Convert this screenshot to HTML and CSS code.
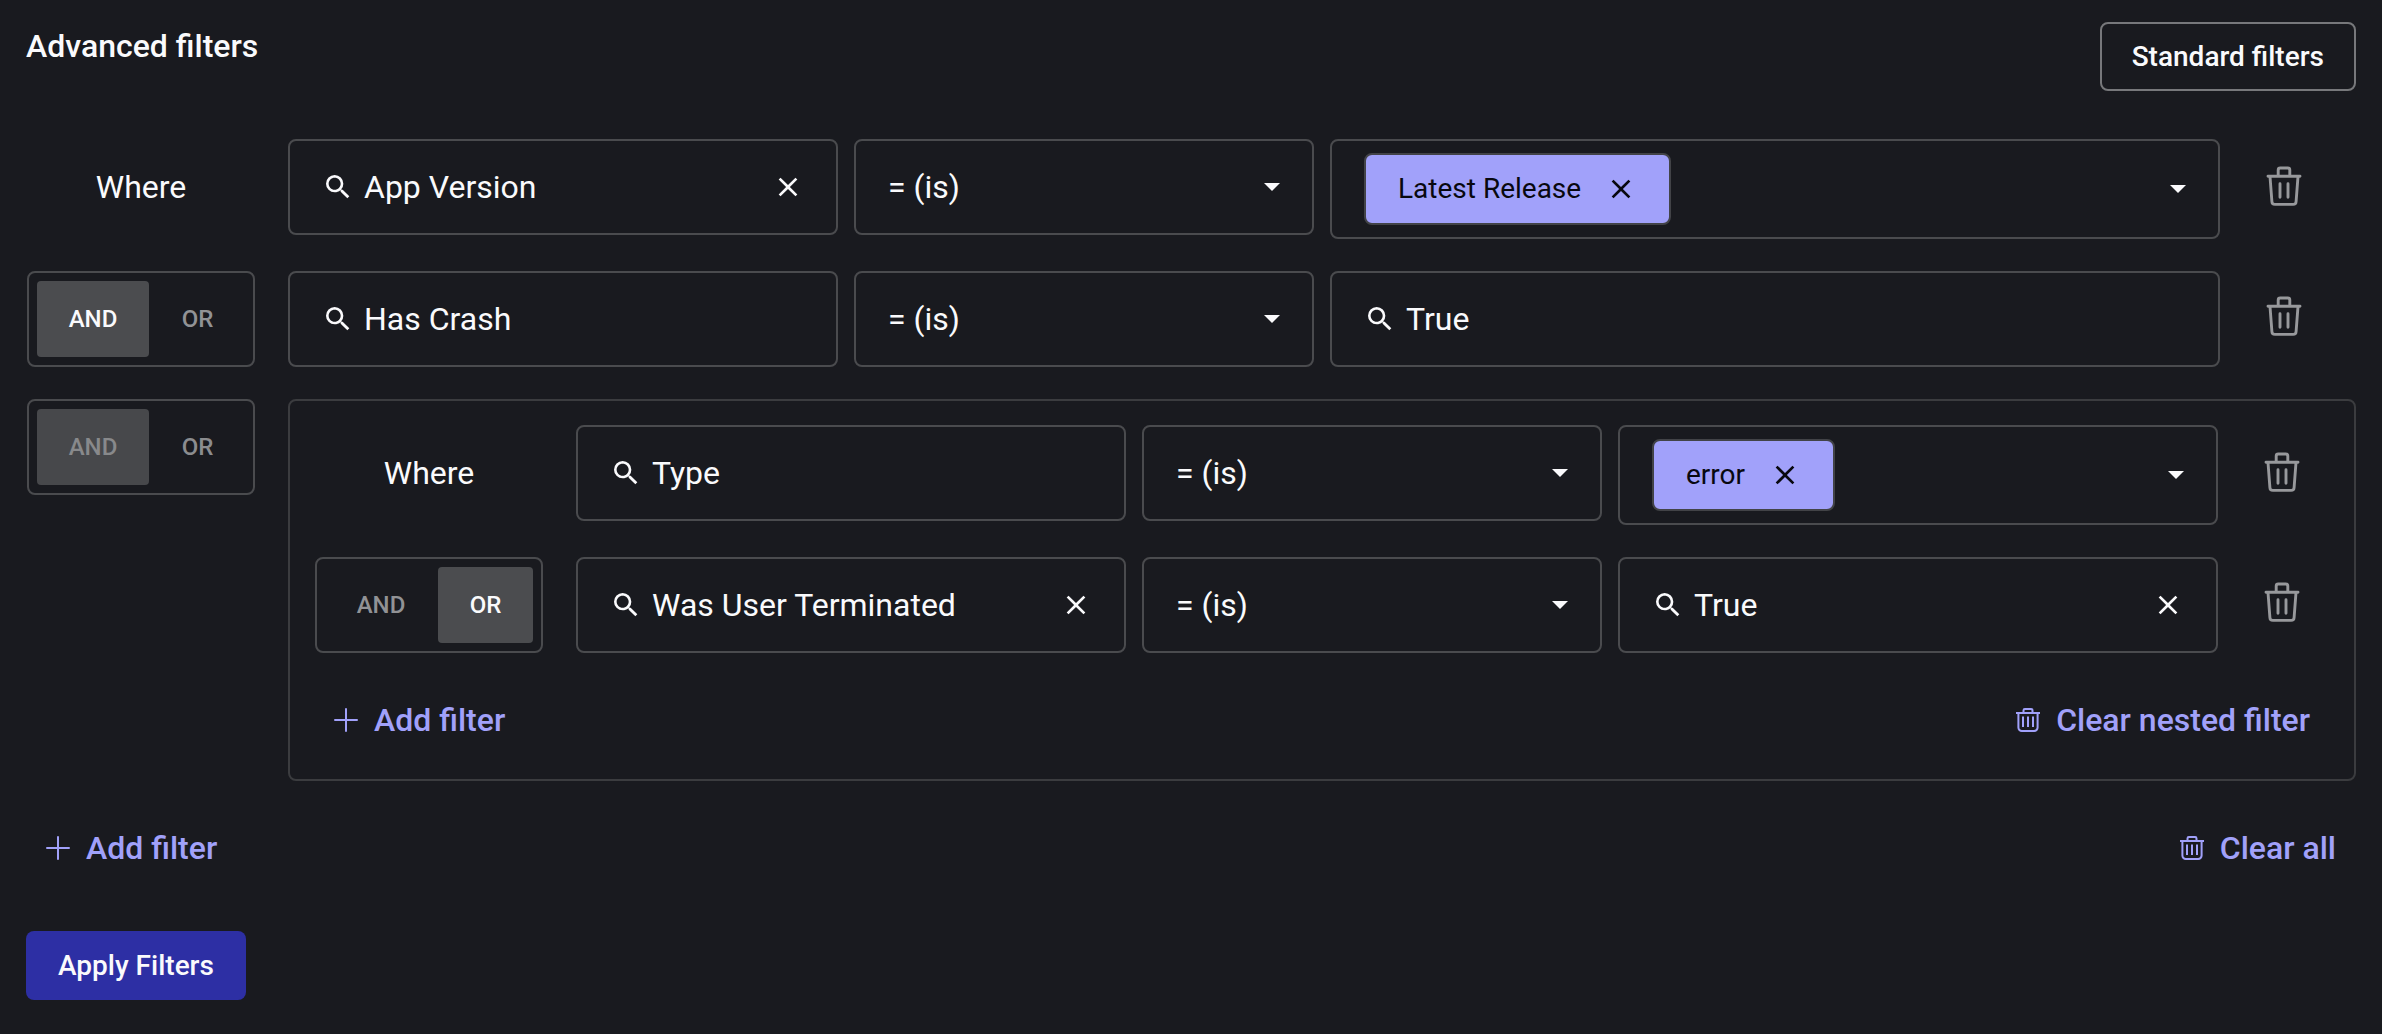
FILE: index.html
```html
<!DOCTYPE html>
<html lang="en">
<head>
<meta charset="utf-8">
<title>Advanced filters</title>
<link rel="stylesheet" href="styles.css">
</head>
<body>
<svg class="sprite" aria-hidden="true">
  <symbol id="search" viewBox="0 0 24 24"><path fill="currentColor" d="M15.5 14h-.79l-.28-.27A6.47 6.47 0 0 0 16 9.5 6.5 6.5 0 1 0 9.5 16c1.61 0 3.09-.59 4.23-1.57l.27.28v.79l5 4.99L20.49 19l-4.99-5zm-6 0C7.01 14 5 11.99 5 9.5S7.01 5 9.5 5 14 7.01 14 9.5 11.99 14 9.5 14z"/></symbol>
  <symbol id="close" viewBox="0 0 24 24"><path fill="currentColor" d="M19 6.41 17.59 5 12 10.59 6.41 5 5 6.41 10.59 12 5 17.59 6.41 19 12 13.41 17.59 19 19 17.59 13.41 12z"/></symbol>
  <symbol id="arrow" viewBox="0 0 16 8"><path fill="currentColor" d="M0 0h16L8 8z"/></symbol>
  <symbol id="plus" viewBox="0 0 24 24"><path fill="none" stroke="currentColor" stroke-width="2" stroke-linecap="round" d="M12 1v22M1 12h22"/></symbol>
  <symbol id="trash" viewBox="0 0 36 40"><path fill="none" stroke="currentColor" stroke-width="2.9" stroke-linecap="round" stroke-linejoin="round" d="M2 10.2h32M12.2 10V4a2 2 0 0 1 2-2h7.6a2 2 0 0 1 2 2v6M4 10.500l1.900 25a3 3 0 0 0 3 2.900h18.200a3 3 0 0 0 3-2.900l1.900-25M14 17.800v13.400M22 17.800v13.400"/></symbol>
  <symbol id="bin" viewBox="0 0 24 24"><path fill="none" stroke="currentColor" stroke-width="2" d="M0 5h24M7.500 5V2.400a1.400 1.400 0 0 1 1.400-1.400h6.200a1.400 1.400 0 0 1 1.400 1.400V5M2.400 5v14.600a3.400 3.400 0 0 0 3.400 3.400h12.400a3.400 3.400 0 0 0 3.400-3.400V5M7 8.500v10.500M12 8.500v10.500M17 8.500v10.500"/></symbol>
</svg>

<main class="page">
  <header class="header">
    <h1 class="title">Advanced filters</h1>
    <button class="button button-outline" type="button">Standard filters</button>
  </header>

  <form class="filters">
    <div class="row">
      <div class="lead">Where</div>
      <div class="field field-name">
        <svg class="icon"><use href="#search"/></svg>
        <input class="input" type="text" value="App Version" aria-label="Filter name">
        <button class="clear" type="button" aria-label="Clear"><svg class="icon"><use href="#close"/></svg></button>
      </div>
      <div class="field field-operator">
        <select class="select" aria-label="Operator"><option>= (is)</option></select>
        <svg class="arrow"><use href="#arrow"/></svg>
      </div>
      <div class="field field-value field-chips">
        <span class="chip">Latest Release<button class="clear" type="button" aria-label="Remove Latest Release"><svg class="icon"><use href="#close"/></svg></button></span>
        <button class="clear" type="button" aria-label="Show values"><svg class="arrow"><use href="#arrow"/></svg></button>
      </div>
      <button class="delete" type="button" aria-label="Delete filter"><svg class="trash"><use href="#trash"/></svg></button>
    </div>

    <div class="row">
      <fieldset class="lead toggle">
        <label class="option option-and"><input class="radio" type="radio" name="join-crash" checked>AND</label>
        <label class="option option-or"><input class="radio" type="radio" name="join-crash">OR</label>
      </fieldset>
      <div class="field field-name">
        <svg class="icon"><use href="#search"/></svg>
        <input class="input" type="text" value="Has Crash" aria-label="Filter name">
      </div>
      <div class="field field-operator">
        <select class="select" aria-label="Operator"><option>= (is)</option></select>
        <svg class="arrow"><use href="#arrow"/></svg>
      </div>
      <div class="field field-value">
        <svg class="icon"><use href="#search"/></svg>
        <input class="input" type="text" value="True" aria-label="Filter value">
      </div>
      <button class="delete" type="button" aria-label="Delete filter"><svg class="trash"><use href="#trash"/></svg></button>
    </div>

    <div class="row row-group">
      <fieldset class="lead toggle" disabled>
        <label class="option option-and"><input class="radio" type="radio" name="join-nested" checked>AND</label>
        <label class="option option-or"><input class="radio" type="radio" name="join-nested">OR</label>
      </fieldset>
      <section class="nested">
        <div class="row">
          <div class="lead">Where</div>
          <div class="field field-name">
            <svg class="icon"><use href="#search"/></svg>
            <input class="input" type="text" value="Type" aria-label="Filter name">
          </div>
          <div class="field field-operator">
            <select class="select" aria-label="Operator"><option>= (is)</option></select>
            <svg class="arrow"><use href="#arrow"/></svg>
          </div>
          <div class="field field-value field-chips">
            <span class="chip">error<button class="clear" type="button" aria-label="Remove error"><svg class="icon"><use href="#close"/></svg></button></span>
            <button class="clear" type="button" aria-label="Show values"><svg class="arrow"><use href="#arrow"/></svg></button>
          </div>
          <button class="delete" type="button" aria-label="Delete filter"><svg class="trash"><use href="#trash"/></svg></button>
        </div>

        <div class="row">
          <fieldset class="lead toggle">
            <label class="option option-and"><input class="radio" type="radio" name="join-terminated">AND</label>
            <label class="option option-or"><input class="radio" type="radio" name="join-terminated" checked>OR</label>
          </fieldset>
          <div class="field field-name">
            <svg class="icon"><use href="#search"/></svg>
            <input class="input" type="text" value="Was User Terminated" aria-label="Filter name">
            <button class="clear" type="button" aria-label="Clear"><svg class="icon"><use href="#close"/></svg></button>
          </div>
          <div class="field field-operator">
            <select class="select" aria-label="Operator"><option>= (is)</option></select>
            <svg class="arrow"><use href="#arrow"/></svg>
          </div>
          <div class="field field-value">
            <svg class="icon"><use href="#search"/></svg>
            <input class="input" type="text" value="True" aria-label="Filter value">
            <button class="clear" type="button" aria-label="Clear"><svg class="icon"><use href="#close"/></svg></button>
          </div>
          <button class="delete" type="button" aria-label="Delete filter"><svg class="trash"><use href="#trash"/></svg></button>
        </div>

        <div class="actions">
          <button class="action" type="button"><svg class="mark"><use href="#plus"/></svg>Add filter</button>
          <button class="action" type="button"><svg class="mark"><use href="#bin"/></svg>Clear nested filter</button>
        </div>
      </section>
    </div>

    <div class="actions">
      <button class="action" type="button"><svg class="mark"><use href="#plus"/></svg>Add filter</button>
      <button class="action" type="button"><svg class="mark"><use href="#bin"/></svg>Clear all</button>
    </div>

    <button class="button button-primary" type="submit">Apply Filters</button>
  </form>
</main>
</body>
</html>
```

FILE: styles.css
```css
* {
  box-sizing: border-box;
}

body {
  margin: 0;
  background: #191a1f;
  color: #fafafc;
  font: 400 32px/48px Roboto, sans-serif;
}

button,
input,
select {
  margin: 0;
  padding: 0;
  border: 0;
  background: none;
  color: inherit;
  font: inherit;
}

button {
  cursor: pointer;
}

svg {
  display: block;
  flex: none;
}

.sprite {
  position: absolute;
  width: 0;
  height: 0;
}

.page {
  padding: 22px 26px 32px;
}

.header {
  display: flex;
  justify-content: space-between;
  align-items: flex-start;
  margin-bottom: 48px;
}

.title {
  margin: 0;
  font-size: 32px;
  font-weight: 500;
  line-height: 48px;
}

.button {
  height: 69px;
  border-radius: 8px;
  font-size: 28px;
  font-weight: 500;
  line-height: 48px;
}

.button-outline {
  padding: 0 30px;
  border: 2px solid #77787b;
}

.button-primary {
  align-self: flex-start;
  margin-top: 16px;
  padding: 0 32px;
  background: #2d2fa4;
}

.filters {
  display: flex;
  flex-direction: column;
  gap: 32px;
}

.row {
  display: flex;
  align-items: flex-start;
  gap: 16px;
}

.filters > .row:not(.row-group) {
  padding-right: 24px;
}

.lead {
  display: flex;
  flex: none;
  align-items: center;
  justify-content: center;
  width: 230px;
  height: 96px;
  margin-right: 16px;
}

.toggle {
  justify-content: space-between;
  width: 228px;
  margin: 0 17px 0 1px;
  padding: 8px;
  border: 2px solid #4a4b4e;
  border-radius: 8px;
}

.option {
  display: flex;
  align-items: center;
  justify-content: center;
  height: 76px;
  border-radius: 4px;
  color: #919295;
  font-size: 24px;
  font-weight: 500;
}

.option-and {
  width: 112px;
}

.option-or {
  width: 95px;
}

.option:has(:checked) {
  background: #4b4c4f;
  color: #fafafc;
}

.toggle:disabled .option {
  color: #8b8c8f;
}

.toggle:disabled .option:has(:checked) {
  background: #47484b;
  color: #88898b;
}

.radio {
  position: absolute;
  width: 1px;
  height: 1px;
  opacity: 0;
}

.field {
  display: flex;
  align-items: center;
  gap: 10px;
  min-width: 0;
  height: 96px;
  padding: 0 32px;
  border: 2px solid #4a4b4e;
  border-radius: 8px;
}

.field-name {
  flex: 0 1 550px;
}

.field-operator {
  position: relative;
  flex: 0 1 460px;
  padding: 0;
}

.field-operator .arrow {
  position: absolute;
  right: 32px;
  pointer-events: none;
}

.field-value {
  flex: 1;
}

.field-chips {
  justify-content: space-between;
  height: 100px;
}

.input {
  flex: 1;
  min-width: 0;
  height: 48px;
  outline: 0;
}

.select {
  width: 100%;
  height: 92px;
  padding: 0 32px;
  appearance: none;
  outline: 0;
}

.icon {
  width: 32px;
  height: 32px;
}

.arrow {
  width: 16px;
  height: 8px;
}

.chip {
  display: flex;
  align-items: center;
  gap: 24px;
  height: 72px;
  padding: 0 32px;
  border: 2px solid #424347;
  border-radius: 8px;
  background: #a1a1fa;
  color: #08080f;
  font-size: 28px;
}

.delete {
  display: flex;
  flex: none;
  align-self: center;
  justify-content: center;
  width: 96px;
  padding-bottom: 6px;
  color: #98999c;
}

.trash {
  width: 36px;
  height: 40px;
}

.nested {
  display: flex;
  flex: 1;
  flex-direction: column;
  gap: 32px;
  min-width: 0;
  padding: 24px;
  border: 2px solid #3b3c3f;
  border-radius: 8px;
}

.actions {
  display: flex;
  justify-content: space-between;
}

.action {
  display: flex;
  align-items: center;
  gap: 16px;
  height: 70px;
  padding: 0 20px;
  color: #a1a1fa;
  font-weight: 500;
}

.mark {
  width: 24px;
  height: 24px;
}
```
